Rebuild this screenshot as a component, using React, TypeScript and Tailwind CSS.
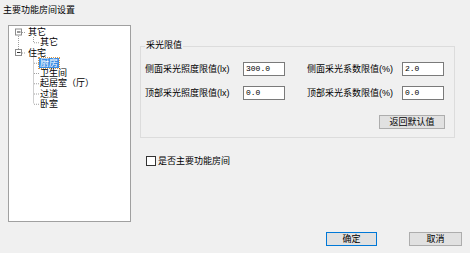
const cjk = { fontFamily: '"Liberation Sans", "Noto Sans CJK SC", sans-serif' };
const mono = { fontFamily: '"Liberation Mono", monospace' };

type Node = { label: string; depth: number; selected?: boolean };

const nodes: Node[] = [
  { label: "其它", depth: 0 },
  { label: "其它", depth: 1 },
  { label: "住宅", depth: 0 },
  { label: "厨房", depth: 1, selected: true },
  { label: "卫生间", depth: 1 },
  { label: "起居室（厅）", depth: 1 },
  { label: "过道", depth: 1 },
  { label: "卧室", depth: 1 },
];

const ROW = 10.25;
const cy = (i: number) => 6 + i * ROW;

function TreeLines() {
  const dash = { stroke: "#a0a0a0", strokeWidth: 1, strokeDasharray: "1 1" };
  const box = (i: number) => (
    <g key={"b" + i}>
      <rect x={6.5} y={cy(i) - 3} width={6} height={6} fill="#fff" stroke="#8c8c8c" />
      <line x1={8} y1={cy(i)} x2={11.5} y2={cy(i)} stroke="#333" />
    </g>
  );
  return (
    <svg className="absolute left-0 top-0" width={121} height={195}>
      <line x1={9.5} y1={cy(0)} x2={9.5} y2={cy(2)} {...dash} />
      <line x1={13} y1={cy(0) + 0.5} x2={17} y2={cy(0) + 0.5} {...dash} />
      <line x1={13} y1={cy(2) + 0.5} x2={17} y2={cy(2) + 0.5} {...dash} />
      <line x1={24.5} y1={cy(0) + 5} x2={24.5} y2={cy(1)} {...dash} />
      <line x1={24.5} y1={cy(2) + 5} x2={24.5} y2={cy(7)} {...dash} />
      {[1, 3, 4, 5, 6, 7].map((i) => (
        <line key={i} x1={25} y1={cy(i) + 0.5} x2={30} y2={cy(i) + 0.5} {...dash} />
      ))}
      {box(0)}
      {box(2)}
    </svg>
  );
}

function Field({ label, value, labelW }: { label: string; value: string; labelW: string }) {
  return (
    <div className="flex items-center">
      <span className={`${labelW} text-[9px] leading-[14px] whitespace-nowrap`}>{label}</span>
      <div className="w-[42px] h-[14px] bg-white border border-[#7a7a7a] pl-[2px] text-[8px] leading-[12px] text-black" style={mono}>
        {value}
      </div>
    </div>
  );
}

export default function App() {
  return (
    <div className="w-[470px] h-[253px] bg-[#f0f0f0] flex flex-col text-black overflow-hidden" style={cjk}>
      <div className="h-[20px] pl-[3px] text-[9px] leading-[20px]">主要功能房间设置</div>

      <div className="flex mt-[5px]">
        <div className="ml-[8px] w-[123px] h-[197px] bg-white border border-[#a0a0a0] relative">
          <TreeLines />
          <div className="relative pt-[1px]">
            {nodes.map((n, i) => (
              <div
                key={i}
                className={`flex items-center h-[10.25px] ${n.depth === 0 ? "pl-[18px]" : "pl-[30px]"}`}
              >
                <span
                  className={`text-[9px] leading-[10px] px-[1px] whitespace-nowrap ${
                    n.selected
                      ? "bg-[#3b8de4] text-white outline outline-1 outline-dotted outline-[#d99a4a]"
                      : ""
                  }`}
                >
                  {n.label}
                </span>
              </div>
            ))}
          </div>
        </div>

        <div className="ml-[9px] w-[315px] flex flex-col">
          <div className="mt-[21px] h-[92px] border border-[#dcdcdc] relative flex flex-col">
            <span className="absolute left-[4px] -top-[8px] px-[1px] bg-[#f0f0f0] text-[9px] leading-[12px]">
              采光限值
            </span>
            <div className="pt-[15px] pl-[4px] flex flex-col gap-[10px]">
              <div className="flex">
                <Field label="侧面采光照度限值(lx)" value="300.0" labelW="w-[98px]" />
                <div className="ml-[22px]">
                  <Field label="侧面采光系数限值(%)" value="2.0" labelW="w-[95px]" />
                </div>
              </div>
              <div className="flex">
                <Field label="顶部采光照度限值(lx)" value="0.0" labelW="w-[98px]" />
                <div className="ml-[22px]">
                  <Field label="顶部采光系数限值(%)" value="0.0" labelW="w-[95px]" />
                </div>
              </div>
            </div>
            <div className="flex justify-end pr-[9px] mt-[15px]">
              <button className="w-[66px] h-[14px] bg-[#e1e1e1] border border-[#adadad] text-[9px] leading-[12px]">
                返回默认值
              </button>
            </div>
          </div>

          <label className="flex items-center mt-[18px] pl-[6px]">
            <span className="w-[10px] h-[10px] bg-white border border-[#333]" />
            <span className="ml-[2px] text-[9px] leading-[10px]">是否主要功能房间</span>
          </label>
        </div>
      </div>

      <div className="flex justify-end mt-[10px] pr-[8px] gap-[32px]">
        <button className="w-[51px] h-[14px] bg-[#e1e1e1] border border-[#0078d7] text-[9px] leading-[12px]">
          确定
        </button>
        <button className="w-[53px] h-[14px] bg-[#e1e1e1] border border-[#adadad] text-[9px] leading-[12px]">
          取消
        </button>
      </div>
    </div>
  );
}
